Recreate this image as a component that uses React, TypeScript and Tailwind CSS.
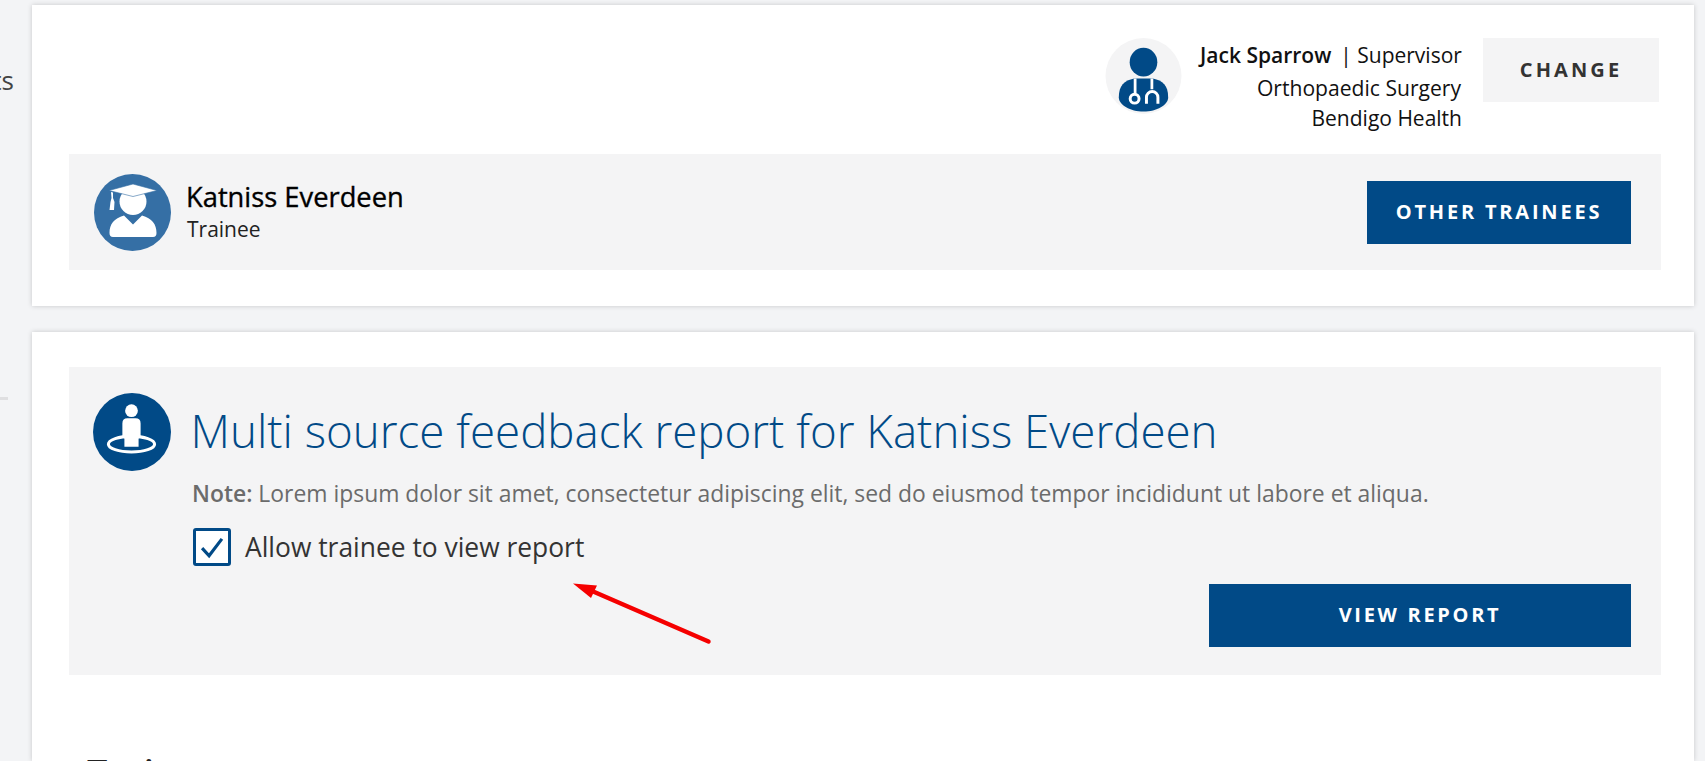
import React from "react";

const NAVY = "#014a87";

function DoctorIcon() {
  return (
    <svg viewBox="0 0 77 77" className="h-[76px] w-[77px] shrink-0">
      <circle cx="38.5" cy="38.5" r="38.5" fill="#f4f4f5" />
      <ellipse cx="38.5" cy="24.5" rx="14" ry="14.5" fill={NAVY} />
      <path d="M13.500 60C13.500 48 19 43 29 41L48 41C58 43 63.500 48 63.500 60C63.500 68 52 74.500 38.500 74.500C25 74.500 13.500 68 13.500 60Z" fill={NAVY} />
      <path d="M30 41V56M47 41V52" stroke="#fff" strokeWidth="2.800" fill="none" />
      <circle cx="29.500" cy="61.500" r="4.500" stroke="#fff" strokeWidth="3" fill="none" />
      <path d="M41.500 66.500V60a5.800 5.800 0 0 1 11.600 0V66.500" stroke="#fff" strokeWidth="3" fill="none" />
    </svg>
  );
}

function GraduateIcon() {
  return (
    <svg viewBox="0 0 77 77" className="h-[77px] w-[77px] shrink-0">
      <circle cx="38.5" cy="38.5" r="38.5" fill="#356fa5" />
      <circle cx="39" cy="27.500" r="13.500" fill="#fff" />
      <path d="M15 16.500L39 10L63 16.500L39 22.500Z" fill="#fff" stroke="#356fa5" strokeWidth="0.6" />
      <path d="M17 18L19 18.500V24L20.500 28L20 36H15.500L16.500 28L17.500 24Z" fill="#fff" />
      <path d="M15.500 59C15.500 50 20 44.500 30 41.500L39 50.500L48 41.500C58 44.500 62.500 50 62.500 59Q62.500 63 59 63H19Q15.500 63 15.500 59Z" fill="#fff" />
    </svg>
  );
}

function PersonRingIcon() {
  return (
    <svg viewBox="0 0 77 77" className="h-[78px] w-[78px] shrink-0">
      <circle cx="38.5" cy="38.5" r="38.5" fill={NAVY} />
      <ellipse cx="38" cy="50.500" rx="22.800" ry="7.700" stroke="#fff" strokeWidth="3" fill="none" />
      <circle cx="38" cy="17.500" r="6.300" fill="#fff" />
      <path d="M29 30Q29 25 34 25H42Q47 25 47 30V42Q47 44 45 45V53H31V45Q29 44 29 42Z" fill="#fff" />
    </svg>
  );
}

function CheckedBox() {
  return (
    <span className="flex h-[38px] w-[38px] shrink-0 items-center justify-center rounded-[3px] border-[3px] border-[#014a87] bg-white">
      <svg viewBox="0 0 24 24" className="h-[28px] w-[28px]">
        <path d="M3.500 13L9.500 19.500L20.500 5" stroke="#014a87" strokeWidth="2.700" fill="none" />
      </svg>
    </span>
  );
}

export default function App() {
  return (
    <div
      className="flex h-[761px] w-[1705px] overflow-hidden bg-[#f3f4f6] text-black"
      style={{ fontFamily: '"Open Sans", "Liberation Sans", sans-serif' }}
    >
      <aside className="flex w-[32px] shrink-0 flex-col">
        <div className="mt-[62px] flex w-[14px] justify-end overflow-hidden text-[26px] leading-[36px] text-[#444]">
          <span className="whitespace-nowrap">ts</span>
        </div>
        <div className="mt-[299px] h-[3px] w-[8px] bg-[#dfdfe1]" />
      </aside>

      <main className="flex w-[1662px] shrink-0 flex-col gap-[26px] pt-[5px]">
        <section className="h-[301px] shrink-0 bg-white pl-[37px] pr-[33px] pt-[33px] shadow-[0_0_5px_rgba(0,0,0,0.18)]">
          <div className="flex h-[116px] items-start justify-end pr-[2px]">
            <DoctorIcon />
            <div className="ml-[18px] w-[262px] text-right text-[21px] leading-[31.500px] text-[#111]">
              <p className="mt-[2px] whitespace-nowrap pr-[2px]">
                <span className="font-semibold">Jack Sparrow</span>
                <span className="ml-[9px]">| Supervisor</span>
              </p>
              <p className="pr-[1px] text-[21.100px]">Orthopaedic Surgery</p>
              <p>Bendigo Health</p>
            </div>
            <button className="ml-[21px] h-[64px] w-[176px] bg-[#f4f4f5] text-[20px] font-bold tracking-[0.155em] text-[#333]">
              CHANGE
            </button>
          </div>
          <div className="flex h-[116px] items-center bg-[#f4f4f5] pl-[25px] pr-[30px]">
            <GraduateIcon />
            <div className="ml-[15px] flex-1">
              <p className="-mt-[2px] text-[27.300px] leading-[34px] [-webkit-text-stroke:0.35px_black]">Katniss Everdeen</p>
              <p className="mt-[1px] pl-[1px] text-[21px] leading-[28px] text-[#222]">Trainee</p>
            </div>
            <button className="h-[63px] w-[264px] bg-[#014a87] text-[20px] font-bold tracking-[0.14em] text-white">
              OTHER TRAINEES
            </button>
          </div>
        </section>

        <section className="relative min-h-0 flex-1 bg-white pl-[37px] pr-[33px] pt-[35px] shadow-[0_0_5px_rgba(0,0,0,0.18)]">
          <div className="h-[308px] bg-[#f4f4f5] pl-[24px] pr-[30px] pt-[26px]">
            <div className="flex items-start">
              <PersonRingIcon />
              <div className="ml-[21px] flex-1">
                <h1 className="-ml-[1.500px] mt-[6px] text-[45.700px] font-light leading-[62px] text-[#014a87]">
                  Multi source feedback report for Katniss Everdeen
                </h1>
                <p className="mt-[18px] text-[22.900px] leading-[30px] text-[#6b6b6b]">
                  <span className="font-semibold">Note:</span> Lorem ipsum dolor sit amet, consectetur adipiscing elit,
                  sed do eiusmod tempor incididunt ut labore et aliqua.
                </p>
                <label className="mt-[19px] flex items-center pl-[1px]">
                  <CheckedBox />
                  <span className="ml-[14px] text-[26.400px] leading-[38px] text-[#333]">Allow trainee to view report</span>
                </label>
              </div>
            </div>
            <div className="mt-[18px] flex justify-end">
              <button className="h-[63px] w-[422px] bg-[#014a87] pb-[1px] text-[20px] font-bold tracking-[0.135em] text-white">
                VIEW REPORT
              </button>
            </div>
          </div>
          <div className="mt-[74px] flex items-start justify-between pl-[18px] pr-[54px]">
            <h2 className="text-[36px] font-semibold leading-[48px] text-[#222]">Trainee</h2>
            <span className="mt-[12px] flex gap-[19px]">
              <span className="h-[4px] w-[1px] bg-[#999]" />
              <span className="h-[4px] w-[1px] bg-[#999]" />
            </span>
          </div>
          <svg
            className="pointer-events-none absolute left-[536px] top-[245px] h-[70px] w-[150px]"
            viewBox="0 0 150 70"
          >
            <path d="M5 6.500L29 8.500L23 21Z" fill="#f50000" />
            <path d="M24 14L140.500 64.500" stroke="#f50000" strokeWidth="4.500" strokeLinecap="round" fill="none" />
          </svg>
        </section>
      </main>
    </div>
  );
}
